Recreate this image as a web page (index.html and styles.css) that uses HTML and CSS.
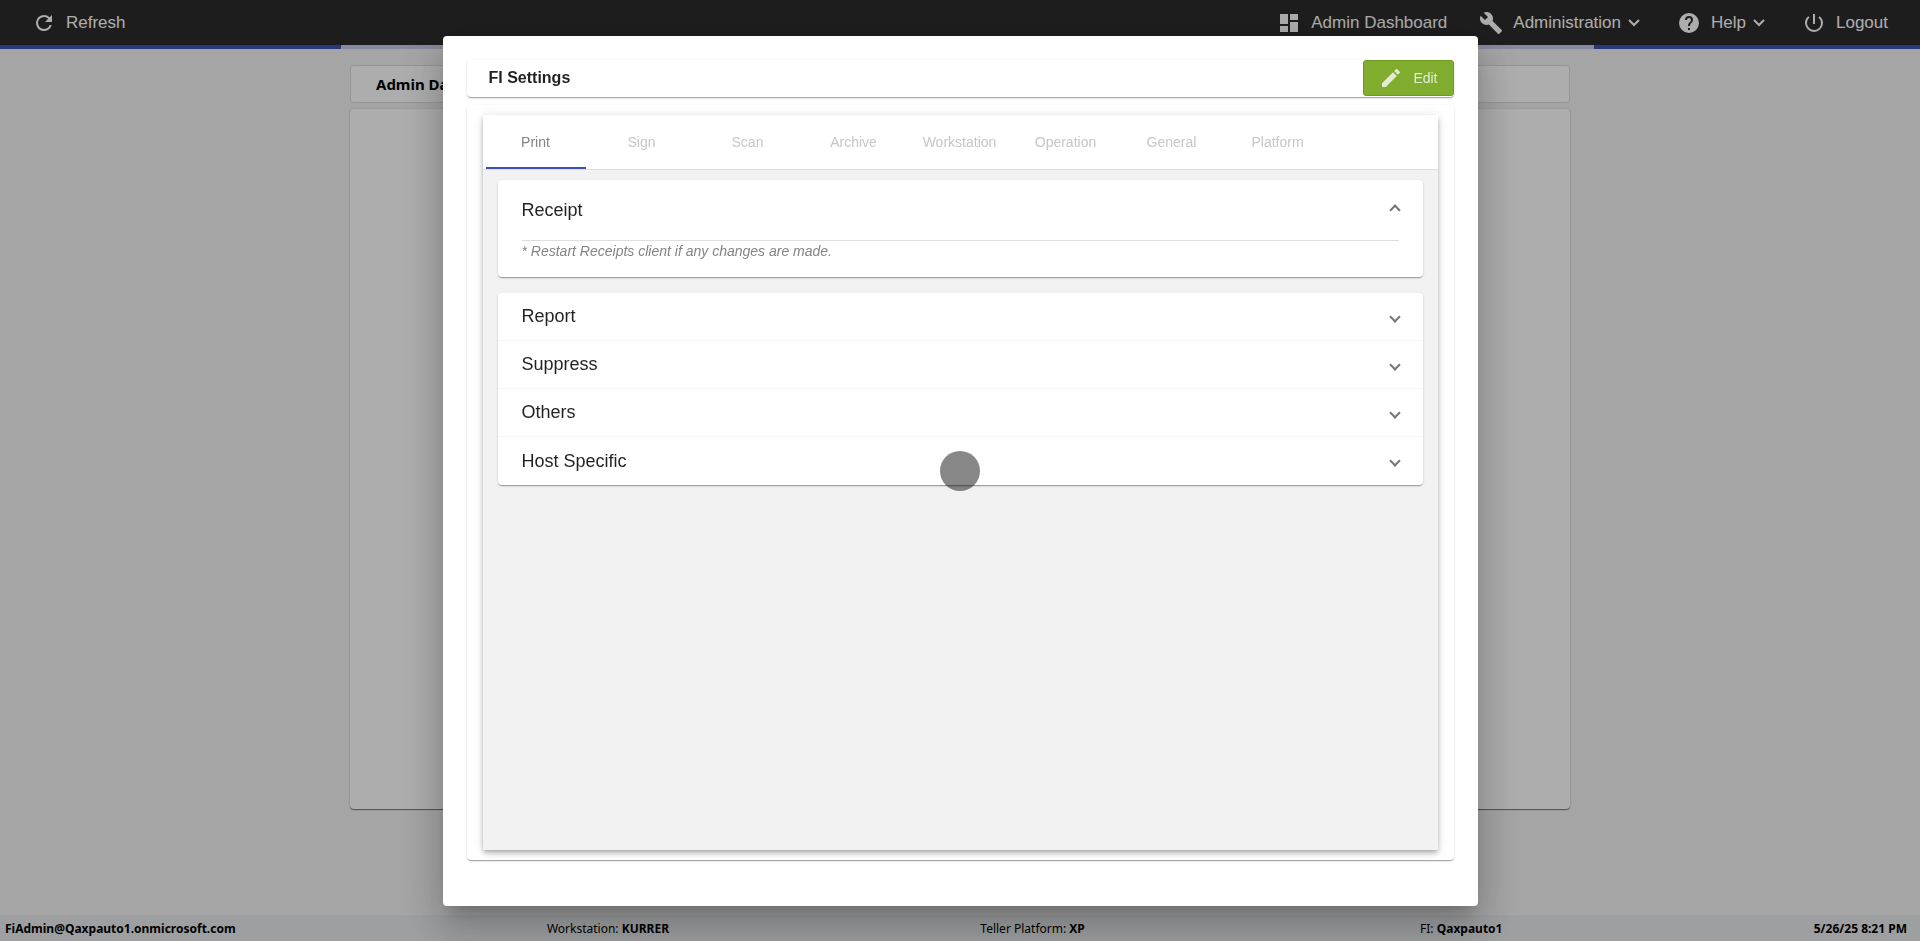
FILE: index.html
```html
<!DOCTYPE html>
<html lang="en">
<head>
    <meta charset="UTF-8">
    <meta name="viewport" content="width=device-width, initial-scale=1.0">
    <title>FI Settings</title>
    <link rel="stylesheet" href="styles.css">
</head>
<body>
    <div class="page">
        <header class="toolbar">
            <button class="nav-item" type="button">
                <svg class="icon" viewBox="0 0 24 24"><path d="M17.65 6.35A7.95 7.95 0 0 0 12 4a8 8 0 1 0 7.73 10h-2.08A6 6 0 1 1 12 6c1.66 0 3.14.69 4.22 1.78L13 11h7V4l-2.35 2.35z"/></svg>
                <span>Refresh</span>
            </button>
            <nav class="nav-right">
                <a class="nav-item" href="#">
                    <svg class="icon" viewBox="0 0 24 24"><path d="M3 13h8V3H3v10zm0 8h8v-6H3v6zm10 0h8V11h-8v10zm0-18v6h8V3h-8z"/></svg>
                    <span>Admin Dashboard</span>
                </a>
                <button class="nav-item nav-admin" type="button">
                    <svg class="icon" viewBox="0 0 24 24"><path d="M22.7 19l-9.1-9.1c.9-2.3.4-5-1.5-6.9-2-2-5-2.4-7.4-1.3L9 6 6 9 1.6 4.7C.4 7.1.9 10.1 2.9 12.1c1.9 1.9 4.6 2.4 6.9 1.5l9.1 9.1c.4.4 1 .4 1.4 0l2.3-2.3c.5-.4.5-1.1.1-1.4z"/></svg>
                    <span>Administration</span>
                    <svg class="caret" viewBox="0 0 14 14"><path d="M2 4l5 5 5-5"/></svg>
                </button>
                <button class="nav-item nav-help" type="button">
                    <svg class="icon" viewBox="0 0 24 24"><path d="M12 2a10 10 0 1 0 0 20 10 10 0 0 0 0-20zm1 17h-2v-2h2v2zm2.07-7.75l-.9.92C13.45 12.9 13 13.5 13 15h-2v-.5c0-1.1.45-2.1 1.17-2.83l1.24-1.26c.37-.36.59-.86.59-1.41a2 2 0 0 0-4 0H8a4 4 0 0 1 8 0c0 .88-.36 1.68-.93 2.25z"/></svg>
                    <span>Help</span>
                    <svg class="caret" viewBox="0 0 14 14"><path d="M2 4l5 5 5-5"/></svg>
                </button>
                <a class="nav-item" href="#">
                    <svg class="icon" viewBox="0 0 24 24"><path d="M13 3h-2v10h2V3zm4.83 2.17l-1.42 1.42A6.92 6.92 0 0 1 19 12a7 7 0 1 1-11.42-5.42L6.17 5.17A8.93 8.93 0 0 0 3 12a9 9 0 0 0 18 0c0-2.74-1.23-5.18-3.17-6.83z"/></svg>
                    <span>Logout</span>
                </a>
            </nav>
        </header>
        <div class="progress"><div class="progress-buffer"></div></div>

        <main class="dashboard">
            <h1 class="dashboard-title">Admin Dashboard</h1>
            <div class="dashboard-card"></div>
        </main>

        <footer class="status-bar">
            <b>FiAdmin@Qaxpauto1.onmicrosoft.com</b>
            <span>Workstation: <b>KURRER</b></span>
            <span>Teller Platform: <b>XP</b></span>
            <span class="status-fi">FI: <b>Qaxpauto1</b></span>
            <b>5/26/25 8:21 PM</b>
        </footer>
    </div>

    <div class="overlay">
        <section class="dialog" role="dialog" aria-labelledby="dialogTitle">
            <div class="dialog-header">
                <h2 id="dialogTitle">FI Settings</h2>
                <button class="edit-button" type="button">
                    <svg class="icon" viewBox="0 0 24 24"><path d="M3 17.25V21h3.75L17.81 9.94l-3.75-3.75L3 17.25zM20.71 7.04c.39-.39.39-1.02 0-1.41l-2.34-2.34a1 1 0 0 0-1.41 0l-1.83 1.83 3.75 3.75 1.83-1.83z"/></svg>
                    <span>Edit</span>
                </button>
            </div>
            <div class="dialog-card">
                <div class="settings">
                    <div class="tabs" role="tablist">
                        <button class="tab active" type="button" role="tab" aria-selected="true">Print</button>
                        <button class="tab" type="button" role="tab">Sign</button>
                        <button class="tab" type="button" role="tab">Scan</button>
                        <button class="tab" type="button" role="tab">Archive</button>
                        <button class="tab" type="button" role="tab">Workstation</button>
                        <button class="tab" type="button" role="tab">Operation</button>
                        <button class="tab" type="button" role="tab">General</button>
                        <button class="tab" type="button" role="tab">Platform</button>
                    </div>
                    <div class="panels">
                        <div class="panel-group">
                            <button class="panel-header open" type="button" aria-expanded="true">Receipt<span class="arrow"></span></button>
                            <div class="panel-body">
                                <p>* Restart Receipts client if any changes are made.</p>
                            </div>
                        </div>
                        <div class="panel-group">
                            <button class="panel-header" type="button" aria-expanded="false">Report<span class="arrow"></span></button>
                            <button class="panel-header" type="button" aria-expanded="false">Suppress<span class="arrow"></span></button>
                            <button class="panel-header" type="button" aria-expanded="false">Others<span class="arrow"></span></button>
                            <button class="panel-header" type="button" aria-expanded="false">Host Specific<span class="arrow"></span></button>
                        </div>
                    </div>
                </div>
            </div>
        </section>
    </div>

    <div class="spinner"></div>
</body>
</html>
```

FILE: styles.css
```css
* {
    box-sizing: border-box;
}

body {
    margin: 0;
    font-family: "Liberation Sans", Arial, sans-serif;
    font-size: 14px;
    background-color: #f3f3f3;
}

button {
    font-family: inherit;
    border: none;
    background: none;
    cursor: pointer;
}

.page {
    display: flex;
    flex-direction: column;
    min-height: 100vh;
}

/* top bar */
.toolbar {
    display: flex;
    justify-content: space-between;
    align-items: center;
    height: 45px;
    padding: 0 32px;
    background-color: #2c2c2c;
}

.nav-right {
    display: flex;
    align-items: center;
    gap: 32px;
}

.nav-item {
    display: flex;
    align-items: center;
    gap: 10px;
    padding: 0;
    color: #fff;
    font-size: 17px;
    line-height: 24px;
    text-decoration: none;
}

.icon {
    width: 24px;
    height: 24px;
    fill: currentColor;
}

.caret {
    width: 14px;
    height: 14px;
    margin-left: -4px;
    fill: none;
    stroke: currentColor;
    stroke-width: 2;
}

.nav-help {
    margin: 0 4px;
}

.progress {
    height: 4px;
    background-color: #3f51b5;
}

.progress-buffer {
    width: 65.25%;
    height: 4px;
    margin-left: 17.76%;
    background-color: #c5cae9;
}

/* page behind the dialog */
.dashboard {
    display: flex;
    flex-direction: column;
    flex: 1;
    gap: 6px;
    width: 100%;
    max-width: 1220px;
    margin: 0 auto;
    padding: 16px 0 106px;
}

.dashboard-title {
    margin: 0;
    padding: 0 25px;
    border: 1px solid #dcdcdc;
    border-radius: 4px;
    background-color: #fff;
    font-family: "Noto Sans", sans-serif;
    font-size: 15px;
    line-height: 36px;
}

.dashboard-card {
    flex: 1;
    border-radius: 4px;
    background-color: #fff;
    box-shadow: 0 1px 1px rgba(0, 0, 0, 0.5), 0 0 2px rgba(0, 0, 0, 0.15);
}

.status-bar {
    display: flex;
    justify-content: space-between;
    align-items: center;
    height: 26px;
    padding: 0 13px 0 5px;
    background-color: #e8eaec;
    font-family: "Noto Sans", sans-serif;
    font-size: 12px;
}

.status-fi {
    padding-left: 24px;
}

/* dialog */
.overlay {
    position: fixed;
    inset: 0;
    display: flex;
    justify-content: center;
    padding: 36px 0 35px;
    background-color: rgba(0, 0, 0, 0.32);
}

.dialog {
    display: flex;
    flex-direction: column;
    gap: 8px;
    width: 1035px;
    max-width: 100%;
    padding: 24px 24px 46px;
    border-radius: 4px;
    background-color: #fff;
    color: rgba(0, 0, 0, 0.87);
    box-shadow: 0 11px 15px -7px rgba(0, 0, 0, 0.2), 0 24px 38px 3px rgba(0, 0, 0, 0.14), 0 9px 46px 8px rgba(0, 0, 0, 0.12);
}

.dialog-header,
.dialog-card,
.panel-group {
    border-radius: 4px;
    box-shadow: 0 2px 1px -1px rgba(0, 0, 0, 0.2), 0 1px 1px rgba(0, 0, 0, 0.14), 0 1px 3px rgba(0, 0, 0, 0.12);
}

.dialog-header {
    display: flex;
    justify-content: space-between;
    align-items: flex-start;
    height: 37px;
    padding-left: 22px;
}

.dialog-header h2 {
    margin: 0;
    font-size: 16px;
    line-height: 36px;
}

.edit-button {
    display: flex;
    align-items: center;
    gap: 10px;
    height: 36px;
    padding: 0 15px;
    border: 1px solid #6f9b22;
    border-radius: 3px;
    background-color: #80ad2d;
    color: #e3ebd8;
    font-size: 14px;
}

.dialog-card {
    display: flex;
    flex: 1;
    padding: 10px 16px;
}

.settings {
    flex: 1;
    background-color: #f2f2f2;
    box-shadow: 0 2px 4px -1px rgba(0, 0, 0, 0.2), 0 4px 5px rgba(0, 0, 0, 0.14), 0 1px 10px rgba(0, 0, 0, 0.12);
}

.tabs {
    display: flex;
    gap: 6px;
    padding: 0 3px;
    border-bottom: 1px solid #dedede;
    background-color: #fff;
}

.tab {
    width: 100px;
    height: 54px;
    padding: 2px 0 0;
    border-bottom: 2px solid transparent;
    color: #c6c6c6;
    font-size: 14px;
}

.tab.active {
    border-bottom-color: #3f51b5;
    color: #848484;
}

.panels {
    display: flex;
    flex-direction: column;
    gap: 16px;
    padding: 10px 15px;
}

.panel-group {
    background-color: #fff;
}

.panel-header {
    display: flex;
    justify-content: space-between;
    align-items: center;
    width: 100%;
    height: 48px;
    padding: 0 24px;
    border-bottom: 1px solid #f5f5f5;
    color: rgba(0, 0, 0, 0.87);
    font-size: 18px;
}

.panel-header:last-child {
    border-bottom: none;
}

.panel-header.open {
    height: 60px;
    border-bottom: none;
}

/* chevron made from two borders of a turned square */
.arrow {
    width: 8px;
    height: 8px;
    border: solid #757575;
    border-width: 0 2px 2px 0;
    transform: rotate(45deg);
}

.open .arrow {
    transform: rotate(-135deg);
}

.panel-body {
    padding: 0 24px 16px;
}

.panel-body p {
    margin: 0;
    border-top: 1px solid #dedede;
    color: #848484;
    font-size: 14px;
    font-style: italic;
    line-height: 20px;
}

.spinner {
    position: fixed;
    top: 50%;
    left: 50%;
    width: 40px;
    height: 40px;
    border-radius: 50%;
    background-color: rgba(0, 0, 0, 0.47);
    transform: translate(-50%, -50%);
}
```
